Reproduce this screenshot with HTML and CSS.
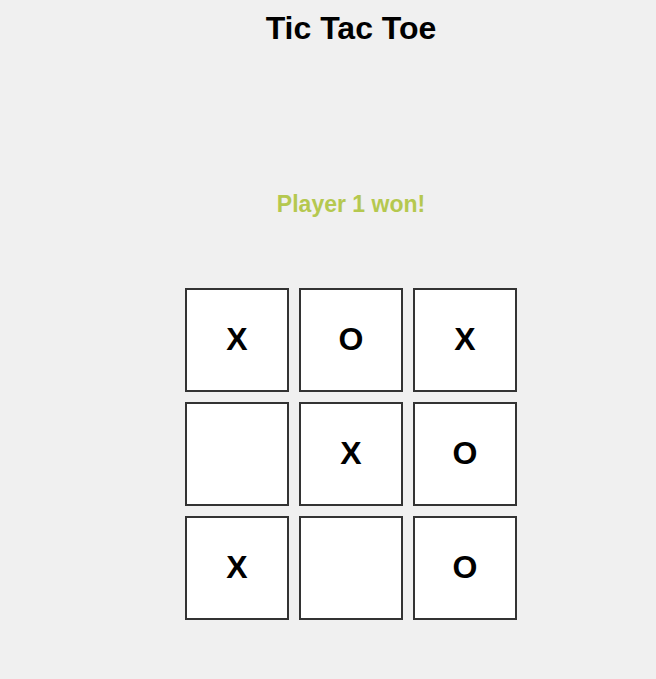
FILE: index.html
```html
<!DOCTYPE html>
<html>
<head>
<meta charset="utf-8">
<title>Tic Tac Toe</title>
<link rel="stylesheet" href="styles.css">
</head>
<body>
<div class="app">
  <h1 class="title">Tic Tac Toe</h1>
  <p class="status">Player 1 won!</p>
  <div class="board">
    <div class="cell">X</div>
    <div class="cell">O</div>
    <div class="cell">X</div>
    <div class="cell"></div>
    <div class="cell">X</div>
    <div class="cell">O</div>
    <div class="cell">X</div>
    <div class="cell"></div>
    <div class="cell">O</div>
  </div>
</div>
</body>
</html>
```
FILE: styles.css
```css
html, body {
  margin: 0;
  padding: 0;
  background: #f0f0f0;
}
body {
  font-family: "Liberation Sans", Arial, sans-serif;
  color: #000;
}
.app {
  display: flex;
  flex-direction: column;
  align-items: center;
  padding-left: 46px;
}
.title {
  margin: 10px 0 0;
  font-size: 32px;
  line-height: 37px;
  font-weight: bold;
}
.status {
  margin: 144px 0 0;
  font-size: 23px;
  line-height: 27px;
  font-weight: bold;
  color: #b5c84f;
}
.board {
  margin-top: 70px;
  display: grid;
  grid-template-columns: repeat(3, 104px);
  grid-auto-rows: 104px;
  gap: 10px;
}
.cell {
  background: #fff;
  border: 2px solid #333;
  display: flex;
  align-items: center;
  justify-content: center;
  padding-bottom: 2px;
  font-size: 32px;
  font-weight: bold;
}
```
